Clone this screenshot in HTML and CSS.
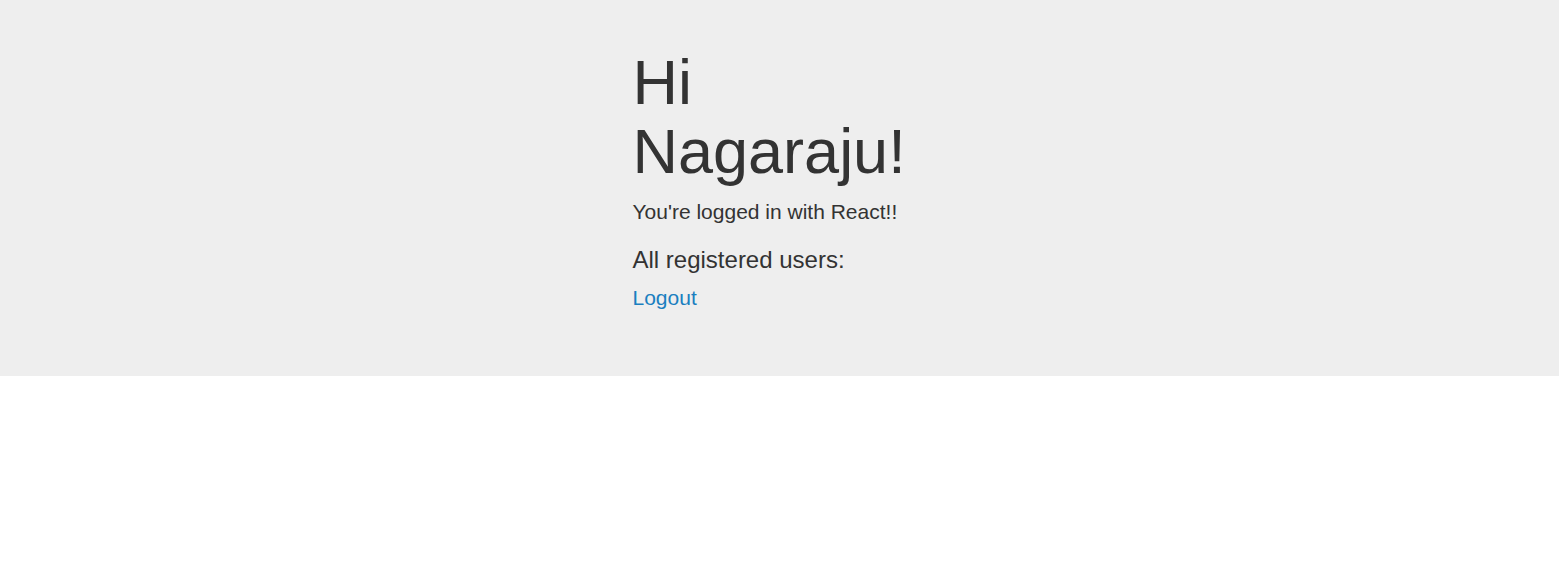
FILE: index.html
```
<!DOCTYPE html>
<html lang="en">
<head>
<meta charset="utf-8">
<title>Home</title>
<link rel="stylesheet" href="styles.css">
</head>
<body>
<div class="jumbotron">
  <div class="container">
    <div class="content">
      <h1 class="greeting">Hi Nagaraju!</h1>
      <p class="lead">You're logged in with React!!</p>
      <h3 class="subtitle">All registered users:</h3>
      <ul class="user-list"></ul>
      <p class="lead"><a class="link" href="#">Logout</a></p>
    </div>
  </div>
</div>
</body>
</html>
```
FILE: styles.css
```
html, body {
  margin: 0;
  padding: 0;
}
body {
  font-family: "Liberation Sans", Arial, Helvetica, sans-serif;
  font-size: 14px;
  line-height: 1.42857143;
  color: #333;
  background: #fff;
}
.jumbotron {
  background: #eee;
  padding: 48px 0;
}
.container {
  width: 1140px;
  margin: 0 auto;
  padding: 0 15px;
  box-sizing: border-box;
}
.content {
  margin-left: 408px;
  width: 335px;
}
.greeting {
  font-size: 63px;
  font-weight: 500;
  line-height: 1.1;
  margin: 0 0 10px;
}
.lead {
  font-size: 21px;
  font-weight: 200;
  line-height: 30px;
  margin: 0 0 15px;
}
.subtitle {
  font-size: 24px;
  font-weight: 500;
  line-height: 1.1;
  margin: 20px 0 10px;
}
.user-list {
  margin: 0 0 10px;
  padding: 0;
}
.link {
  color: #1a7fc0;
  text-decoration: none;
}
```
